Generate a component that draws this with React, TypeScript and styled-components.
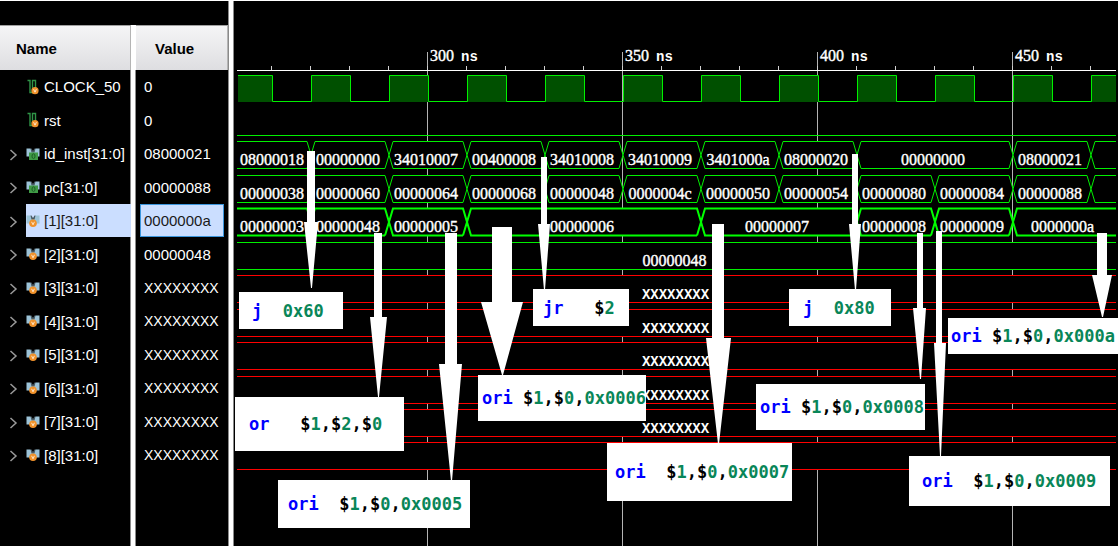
import React from "react";
import styled, { createGlobalStyle } from "styled-components";

const GlobalStyle = createGlobalStyle`
  *, *::before, *::after { box-sizing: border-box; }
  body { margin: 0; background: #000; }
`;

const Page = styled.main`
  display: flex;
  min-height: 100vh;
  border-top: 1px solid #fff;
  background: #000;
  color: #fff;
  font-family: "Liberation Sans", Arial, sans-serif;
  overflow: hidden;
`;

const SignalPanel = styled.section`
  flex: none;
  width: 228px;
  background: linear-gradient(
    to right,
    #000 130px, #8a8a8a 130px, #8a8a8a 131px,
    #fff 131px, #fff 135px,
    #8a8a8a 135px, #8a8a8a 136px, #000 136px
  );
`;

const ToolStrip = styled.div`
  height: 24px;
  background: #000;
`;

const SignalTable = styled.table`
  width: 100%;
  table-layout: fixed;
  border-collapse: collapse;
  font-size: 15px;
`;

const HeadCell = styled.th<{ $first?: boolean }>`
  width: ${(p) => (p.$first ? 136 : 92)}px;
  height: 45px;
  padding: 0;
  background: #fff;
`;

const HeadFace = styled.div<{ $first?: boolean }>`
  display: flex;
  align-items: center;
  height: 45px;
  margin-right: ${(p) => (p.$first ? 5 : 0)}px;
  padding-left: ${(p) => (p.$first ? 16 : 19)}px;
  border-top: 1px solid #a0a0a0;
  border-right: 1px solid #b4b4b4;
  background: linear-gradient(#f5f5f6, #dedee1);
  color: #000;
  font-weight: bold;
`;

const SignalRow = styled.tr`
  height: 34px;
  &:nth-child(odd) { height: 33px; }
`;

const Cell = styled.td`
  height: inherit;
  padding: 0;
`;

const NameLine = styled.div`
  display: flex;
  align-items: stretch;
  height: 33px;
  margin-right: 5px;
`;

const Expander = styled.button`
  display: flex;
  align-items: center;
  width: 26px;
  padding: 2px 0 0 9px;
  border: 0;
  background: none;
`;

const Spacer = styled.span`
  width: 26px;
`;

const SignalName = styled.span<{ $selected?: boolean }>`
  flex: 1;
  display: flex;
  align-items: center;
  gap: 4px;
  white-space: nowrap;
  background: ${(p) => (p.$selected ? "#cbdeff" : "transparent")};
  color: ${(p) => (p.$selected ? "#1a1a1a" : "#fff")};
`;

const SignalValue = styled.div<{ $selected?: boolean; $unknown?: boolean }>`
  display: flex;
  align-items: center;
  height: 33px;
  margin: 0 4px;
  padding-left: 3px;
  border: 1px solid ${(p) => (p.$selected ? "#3c96dc" : "transparent")};
  background: ${(p) => (p.$selected ? "#cbdeff" : "transparent")};
  color: ${(p) => (p.$selected ? "#1a1a1a" : "#fff")};
  font-size: ${(p) => (p.$unknown ? 14 : 15)}px;
`;

const Splitter = styled.div`
  flex: none;
  width: 6px;
  border: 1px solid #8a8a8a;
  border-width: 0 1px;
  background: #fff;
`;

const WavePanel = styled.section`
  position: relative;
  flex: 1;
  min-width: 0;
  overflow: hidden;
`;

const WaveDrawing = styled.svg`
  display: block;
`;

const HexText = styled.text`
  fill: #fff;
  font: 16px "Liberation Serif", "Times New Roman", serif;
  stroke: #fff;
  stroke-width: 0.4px;
`;

const UnknownText = styled.text`
  fill: #fff;
  font: bold 14px "Liberation Mono", monospace;
`;

const UnitText = styled.tspan`
  font: bold 14px "Liberation Mono", monospace;
  stroke: none;
`;

const Note = styled.div<{ $x: number; $y: number; $w: number; $h: number; $pad: number }>`
  position: absolute;
  left: ${(p) => p.$x}px;
  top: ${(p) => p.$y}px;
  width: ${(p) => p.$w}px;
  height: ${(p) => p.$h}px;
  padding-left: ${(p) => p.$pad}px;
  display: flex;
  align-items: center;
  background: #fff;
`;

const Code = styled.code`
  font: bold 17px "DejaVu Sans Mono", monospace;
  color: #000;
  white-space: pre;
`;

const Keyword = styled.span`
  color: #0000ff;
`;

const Num = styled.span`
  color: #098658;
`;

type Kind = "bit" | "bus" | "reg";

const signals: { name: string; value: string; kind: Kind; selected?: boolean }[] = [
  { name: "CLOCK_50", value: "0", kind: "bit" },
  { name: "rst", value: "0", kind: "bit" },
  { name: "id_inst[31:0]", value: "08000021", kind: "bus" },
  { name: "pc[31:0]", value: "00000088", kind: "bus" },
  { name: "[1][31:0]", value: "0000000a", kind: "reg", selected: true },
  { name: "[2][31:0]", value: "00000048", kind: "reg" },
  ...[3, 4, 5, 6, 7, 8].map((n) => ({
    name: `[${n}][31:0]`,
    value: "XXXXXXXX",
    kind: "reg" as Kind,
  })),
];

function SignalIcon({ kind }: { kind: Kind }) {
  if (kind === "bit") {
    return (
      <svg width="14" height="16" viewBox="0 0 14 16" aria-hidden="true">
        <path d="M1.5 1.5H4V13.5H6.5V1.5H9.5V9" fill="none" stroke="#2f9447" strokeWidth="1.4" />
        <circle cx="9" cy="11.7" r="3.6" fill="#f0922b" />
        <path d="M7.6 10.2L9 13.2L10.4 10.2" fill="none" stroke="#ffe6c8" strokeWidth="1" />
      </svg>
    );
  }
  return (
    <svg width="14" height="16" viewBox="0 0 14 16" aria-hidden="true">
      <path d="M0.5 2.5H4.5L7 6L9.5 2.5H13.5V10.5H0.5Z" fill="#9cc3d8" />
      <path d="M4.5 2.5H5.5L7 5L8.5 2.5H9.5L8.5 6.5H5.5Z" fill="#4a5a63" />
      {kind === "bus" ? (
        <>
          <rect x="3" y="6.5" width="9" height="7.5" fill="#3f9b46" />
          <ellipse cx="7.5" cy="10.2" rx="1.5" ry="2.4" fill="none" stroke="#1d5c25" strokeWidth="1" />
        </>
      ) : (
        <>
          <circle cx="7" cy="10.3" r="3.8" fill="#f0922b" />
          <path d="M5.6 8.8L7 11.8L8.4 8.8" fill="none" stroke="#ffe6c8" strokeWidth="1" />
        </>
      )}
    </svg>
  );
}

// Horizontal scale of the time axis
const LEFT = 237;
const RIGHT = 1116;
const xAt = (ns: number) => Math.round(427.8 + (ns - 300) * 3.9);

const ORIGIN = 234;
const GREEN = "#00f000";
const RED = "#ff0000";

interface BusSpec {
  top: number;
  edges: number[];
  values: string[];
  bold?: boolean;
  unknown?: boolean;
}

const buses: BusSpec[] = [
  {
    top: 141,
    edges: [270, 290, 310, 330, 350, 370, 390, 410, 450, 470],
    values: ["08000018", "00000000", "34010007", "00400008", "34010008", "34010009", "3401000a", "08000020", "00000000", "08000021", ""],
  },
  {
    top: 175,
    edges: [270, 290, 310, 330, 350, 370, 390, 410, 430, 450, 470],
    values: ["00000038", "00000060", "00000064", "00000068", "00000048", "0000004c", "00000050", "00000054", "00000080", "00000084", "00000088", ""],
  },
  {
    top: 208,
    edges: [270, 290, 310, 370, 410, 430, 450],
    values: ["00000003", "00000048", "00000005", "00000006", "00000007", "00000008", "00000009", "0000000a"],
    bold: true,
  },
  { top: 242, edges: [], values: ["00000048"] },
  ...[275, 309, 342, 376, 409].map((top) => ({ top, edges: [], values: ["XXXXXXXX"], unknown: true })),
  { top: 442, edges: [], values: [""], unknown: true },
];

function Bus({ top, edges, values, bold, unknown }: BusSpec) {
  const t = top + 0.5;
  const b = top + 27.5;
  const m = (t + b) / 2;
  const xs = [LEFT, ...edges.map(xAt), RIGHT];
  const stroke = unknown ? RED : bold ? "#00ff00" : GREEN;
  const Text = unknown ? UnknownText : HexText;
  const shift = unknown ? 1 : 2;
  return (
    <g>
      {values.map((v, i) => {
        const first = i === 0;
        const last = i === values.length - 1;
        const x0 = xs[i];
        const x1 = xs[i + 1];
        const shape = [
          ...(first ? [[x0, b], [x0, t]] : [[x0 + 4, b], [x0, m], [x0 + 4, t]]),
          ...(last ? [[x1, t], [x1, b]] : [[x1 - 4, t], [x1, m], [x1 - 4, b]]),
        ].map((p) => p.join(" "));
        const upper = shape.slice(1, last ? -1 : undefined);
        const lower = [...(first ? [`${x0} ${b}`] : [`${x0} ${m}`, `${x0 + 4} ${b}`]), `${last ? x1 : x1 - 4} ${b}`];
        return (
          <g key={i} fill="none" stroke={stroke} strokeWidth={bold ? 2 : 1}>
            <polygon points={shape.join(" ")} fill="#000" stroke="none" />
            <polyline points={upper.join(" ")} />
            <polyline points={lower.join(" ")} />
          </g>
        );
      })}
      {values.map((v, i) =>
        v ? (
          <Text key={i} x={(xs[i] + xs[i + 1]) / 2 - shift} y={top + 24} textAnchor="middle">
            {v}
          </Text>
        ) : null
      )}
    </g>
  );
}

// Start of each 10 ns high phase
const highs = [250, 270, 290, 310, 330, 350, 370, 390, 410, 430, 450, 470];

function Clock() {
  const spans = highs.map((t) => [Math.max(xAt(t), LEFT + 1), Math.min(xAt(t + 10), RIGHT)]);
  const line = spans
    .map(([a, z], i) => `${i === 0 ? `M${a} 75.5` : `V101.5H${a + 0.5}V75.5`}H${z + (i === spans.length - 1 ? 0 : 0.5)}`)
    .join("");
  return (
    <g>
      {spans.map(([a, z]) => (
        <rect key={a} x={a} y="75" width={z - a} height="27" fill="#005000" />
      ))}
      <path d={line} fill="none" stroke={GREEN} />
    </g>
  );
}

// Each arrow: shaft left/right, shaft top, head left/right, head top, tip x/y
const arrows = [
  [307, 315, 151, 304, 318, 222, 311, 288],
  [374, 382, 233, 370, 387, 317, 378, 397],
  [445, 457, 233, 439, 462, 364, 451, 481],
  [492, 512, 227, 481, 523, 302, 502, 375],
  [541, 547, 157, 538, 550, 224, 544, 290],
  [712, 724, 224, 706, 731, 338, 718, 444],
  [852, 858, 154, 849, 861, 224, 855, 290],
  [917, 923, 233, 913, 926, 308, 920, 379],
  [936, 942, 231, 934, 946, 343, 940, 456],
  [1097, 1107, 233, 1092, 1112, 275, 1102, 317],
];

const notes = [
  { x: 239, y: 292, w: 104, h: 37, pad: 13, op: "j", gap: 2, args: "0x60" },
  { x: 235, y: 397, w: 169, h: 54, pad: 14, op: "or", gap: 3, args: "$1,$2,$0" },
  { x: 278, y: 480, w: 192, h: 48, pad: 10, op: "ori", gap: 2, args: "$1,$0,0x0005" },
  { x: 478, y: 375, w: 168, h: 46, pad: 4, op: "ori", gap: 1, args: "$1,$0,0x0006" },
  { x: 533, y: 289, w: 96, h: 37, pad: 10, op: "jr", gap: 3, args: "$2" },
  { x: 607, y: 443, w: 185, h: 58, pad: 8, op: "ori", gap: 2, args: "$1,$0,0x0007" },
  { x: 789, y: 289, w: 102, h: 37, pad: 14, op: "j", gap: 2, args: "0x80" },
  { x: 756, y: 384, w: 169, h: 46, pad: 4, op: "ori", gap: 1, args: "$1,$0,0x0008" },
  { x: 909, y: 456, w: 201, h: 50, pad: 13, op: "ori", gap: 2, args: "$1,$0,0x0009" },
  { x: 948, y: 318, w: 172, h: 36, pad: 3, op: "ori", gap: 1, args: "$1,$0,0x000a" },
];

const ticks = Array.from({ length: 22 }, (_, i) => 260 + i * 10);
const majors = [300, 350, 400, 450];

export default function App() {
  return (
    <>
      <GlobalStyle />
      <Page>
        <SignalPanel aria-label="Signals">
          <ToolStrip />
          <SignalTable>
            <thead>
              <tr>
                <HeadCell $first scope="col"><HeadFace $first>Name</HeadFace></HeadCell>
                <HeadCell scope="col"><HeadFace>Value</HeadFace></HeadCell>
              </tr>
            </thead>
            <tbody>
              {signals.map((s) => (
                <SignalRow key={s.name}>
                  <Cell>
                    <NameLine>
                      {s.kind === "bit" ? (
                        <Spacer />
                      ) : (
                        <Expander type="button" aria-label={`Expand ${s.name}`}>
                          <svg width="9" height="12" viewBox="0 0 9 12" aria-hidden="true">
                            <path d="M1.5 1L7 6L1.5 11" fill="none" stroke="#9a9a9a" strokeWidth="1.5" />
                          </svg>
                        </Expander>
                      )}
                      <SignalName $selected={s.selected}>
                        <SignalIcon kind={s.kind} />
                        {s.name}
                      </SignalName>
                    </NameLine>
                  </Cell>
                  <Cell>
                    <SignalValue $selected={s.selected} $unknown={s.value[0] === "X"}>
                      {s.value}
                    </SignalValue>
                  </Cell>
                </SignalRow>
              ))}
            </tbody>
          </SignalTable>
        </SignalPanel>
        <Splitter />
        <WavePanel aria-label="Waveform">
          <WaveDrawing width="884" height="545" viewBox={`${ORIGIN} 1 884 545`}>
            {majors.map((t) => (
              <g key={t}>
                <path d={`M${xAt(t) - 0.5} 52V546`} stroke="#b4b4b4" />
                <HexText x={xAt(t) + 2} y="61">
                  {t}
                  <UnitText dx="7">ns</UnitText>
                </HexText>
              </g>
            ))}
            {ticks.map((t) => (
              <path key={t} d={`M${xAt(t) - 0.5} 66V70`} stroke="#d0d0d0" />
            ))}
            <path d={`M${LEFT} 70.5H${RIGHT}`} stroke="#fff" />
            <Clock />
            <path d={`M${LEFT} 135.5H${RIGHT}`} stroke={GREEN} />
            {buses.map((b) => (
              <Bus key={b.top} {...b} />
            ))}
            {arrows.map(([sl, sr, st, hl, hr, ht, tx, ty]) => (
              <polygon
                key={tx}
                points={`${sl},${st} ${sr},${st} ${sr},${ht} ${hr},${ht} ${tx + 1},${ty} ${tx},${ty} ${hl},${ht} ${sl},${ht}`}
                fill="#fff"
              />
            ))}
          </WaveDrawing>
          {notes.map((n) => (
            <Note key={n.x} $x={n.x - ORIGIN} $y={n.y - 1} $w={n.w} $h={n.h} $pad={n.pad}>
              <Code>
                <Keyword>{n.op}</Keyword>
                {" ".repeat(n.gap)}
                {n.args.split(/([$,])/).filter(Boolean).map((part, i) =>
                  part === "$" || part === "," ? part : <Num key={i}>{part}</Num>
                )}
              </Code>
            </Note>
          ))}
        </WavePanel>
      </Page>
    </>
  );
}
